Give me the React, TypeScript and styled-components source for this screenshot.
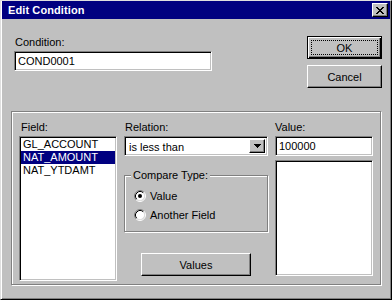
import React from 'react';
import styled, { createGlobalStyle, css } from 'styled-components';

const Global = createGlobalStyle`
  html, body { margin: 0; padding: 0; background: #c0c0c0; }
  body { font-family: "Liberation Sans", Arial, sans-serif; font-size: 11px; color: #000; }
  * { box-sizing: border-box; }
`;

const sunken = css`
  background: #fff;
  border: 1px solid;
  border-color: #808080 #fff #fff #808080;
  box-shadow: inset 1px 1px 0 #000, inset -1px -1px 0 #c0c0c0;
`;

const raised = css`
  background: #c0c0c0;
  border: 1px solid;
  border-color: #fff #000 #000 #fff;
  box-shadow: inset -1px -1px 0 #808080;
`;

const Window = styled.div`
  width: 392px;
  height: 300px;
  background: #c0c0c0;
  border-style: solid;
  border-width: 1px;
  border-color: #dfdfdf #000 #000 #dfdfdf;
  box-shadow: inset 1px 0 0 #fff, inset -1px -1px 0 #808080;
  padding: 0 1px 1px 1px;
  display: flex;
  flex-direction: column;
`;

const TitleBar = styled.div`
  height: 18px;
  background: #000080;
  color: #fff;
  display: flex;
  align-items: center;
  padding: 0 2px 0 6px;
`;

const Title = styled.div`
  flex: 1;
  font-weight: bold;
  font-size: 11px;
  letter-spacing: 0.1px;
`;

const CloseBtn = styled.div`
  ${raised};
  width: 16px;
  height: 14px;
  display: flex;
  align-items: center;
  justify-content: center;
`;

const Body = styled.div`
  flex: 1;
  padding: 17px 8px 0 9px;
  display: flex;
  flex-direction: column;
`;

const TopRow = styled.div`
  display: grid;
  grid-template-columns: 198px 1fr 75px;
  padding-left: 3px;
`;

const Field = styled.div`
  display: flex;
  flex-direction: column;
`;

const Label = styled.div<{ $indent?: number }>`
  height: 13px;
  line-height: 13px;
  margin-left: ${(p) => p.$indent ?? 0}px;
  margin-bottom: 2px;
  white-space: nowrap;
`;

const TextBox = styled.div`
  ${sunken};
  height: 20px;
  width: 100%;
  padding: 0 3px;
  line-height: 18px;
  white-space: nowrap;
`;

const ButtonCol = styled.div`
  grid-column: 3;
  display: flex;
  flex-direction: column;
  gap: 6px;
`;

const Button = styled.div<{ $default?: boolean; $w?: number }>`
  width: ${(p) => p.$w ?? 75}px;
  height: 23px;
  display: flex;
  align-items: stretch;
  justify-content: center;
  text-align: center;
  ${(p) =>
    p.$default
      ? css`
          background: #c0c0c0;
          border: 1px solid #000;
          box-shadow: inset 1px 1px 0 #fff, inset -1px -1px 0 #000, inset -2px -2px 0 #808080;
          padding: 3px;
        `
      : css`
          ${raised};
          padding: 2px;
        `}
`;

const ButtonText = styled.span<{ $focus?: boolean }>`
  flex: 1;
  display: flex;
  align-items: center;
  justify-content: center;
  border: 1px ${(p) => (p.$focus ? 'dotted #000' : 'solid transparent')};
`;

const Frame = styled.div`
  margin-top: 23px;
  width: 370px;
  height: 174px;
  border: 1px solid #808080;
  box-shadow: inset 1px 1px 0 #fff, 1px 1px 0 #fff;
  padding: 9px 0 0 7px;
  display: grid;
  grid-template-columns: 98px 144px 98px;
  column-gap: 7px;
`;

const Column = styled.div`
  display: flex;
  flex-direction: column;
`;

const ListBox = styled.div<{ $h: number; $gap?: number }>`
  ${sunken};
  height: ${(p) => p.$h}px;
  margin-top: ${(p) => p.$gap ?? 0}px;
  padding: 1px 1px;
  overflow: hidden;
`;

const ListItem = styled.div<{ $selected?: boolean }>`
  height: 13px;
  line-height: 13px;
  padding-left: 2px;
  white-space: nowrap;
  background: ${(p) => (p.$selected ? '#000080' : 'transparent')};
  color: ${(p) => (p.$selected ? '#fff' : '#000')};
`;

const Combo = styled.div`
  ${sunken};
  height: 20px;
  display: flex;
  align-items: stretch;
  padding: 2px;
`;

const ComboText = styled.div`
  flex: 1;
  line-height: 16px;
  padding-left: 2px;
`;

const DropBtn = styled.div`
  ${raised};
  width: 16px;
  display: flex;
  align-items: center;
  justify-content: center;
`;

const Group = styled.fieldset`
  margin: 13px 0 0 0;
  padding: 0;
  height: 63px;
  border: 1px solid #808080;
  box-shadow: inset 1px 1px 0 #fff, 1px 1px 0 #fff;
  display: flex;
  flex-direction: column;
  min-width: 0;
`;

const Legend = styled.legend`
  margin-left: 6px;
  padding: 0 2px;
  background: #c0c0c0;
  line-height: 13px;
  height: 13px;
`;

const RadioRow = styled.div<{ $first?: boolean }>`
  display: flex;
  align-items: center;
  gap: 4px;
  height: 13px;
  padding-left: 9px;
  margin-top: ${(p) => (p.$first ? 7 : 6)}px;
`;

const ValuesWrap = styled.div`
  margin-top: 21px;
  padding-left: 17px;
`;

const CloseIcon = () => {
  const rows = ['xx....xx', '.xx..xx.', '..xxxx..', '...xx...', '..xxxx..', '.xx..xx.', 'xx....xx'];
  const d = rows
    .map((r, y) =>
      r
        .split('')
        .map((c, x) => (c === 'x' ? `M${x} ${y}h1v1h-1z` : ''))
        .join('')
    )
    .join('');
  return (
    <svg width="8" height="7" viewBox="0 0 8 7" shapeRendering="crispEdges">
      <path d={d} fill="#000" />
    </svg>
  );
};

const DownArrow = () => (
  <svg width="7" height="4" viewBox="0 0 7 4" shapeRendering="crispEdges">
    <path d="M0 0h7v1h-1v1h-1v1h-1v1h-1v-1h-1v-1h-1v-1h-1z" fill="#000" />
  </svg>
);

const Radio = ({ checked }: { checked?: boolean }) => (
  <svg width="12" height="12" viewBox="0 0 12 12">
    <circle cx="6" cy="6" r="4.5" fill="#fff" />
    <path d="M2.11 9.89 A5.5 5.5 0 0 1 9.89 2.11" fill="none" stroke="#808080" />
    <path d="M9.89 2.11 A5.5 5.5 0 0 1 2.11 9.89" fill="none" stroke="#fff" />
    <path d="M2.82 9.18 A4.5 4.5 0 0 1 9.18 2.82" fill="none" stroke="#000" />
    <path d="M9.18 2.82 A4.5 4.5 0 0 1 2.82 9.18" fill="none" stroke="#dfdfdf" />
    {checked && <circle cx="6" cy="6" r="2" fill="#000" />}
  </svg>
);

export default function App() {
  return (
    <>
      <Global />
      <Window>
        <TitleBar>
          <Title>Edit Condition</Title>
          <CloseBtn>
            <CloseIcon />
          </CloseBtn>
        </TitleBar>
        <Body>
          <TopRow>
            <Field>
              <Label $indent={1}>Condition:</Label>
              <TextBox>COND0001</TextBox>
            </Field>
            <ButtonCol>
              <Button $default>
                <ButtonText $focus>OK</ButtonText>
              </Button>
              <Button>
                <ButtonText>Cancel</ButtonText>
              </Button>
            </ButtonCol>
          </TopRow>
          <Frame>
            <Column>
              <Label $indent={2}>Field:</Label>
              <ListBox $h={145}>
                <ListItem>GL_ACCOUNT</ListItem>
                <ListItem $selected>NAT_AMOUNT</ListItem>
                <ListItem>NAT_YTDAMT</ListItem>
              </ListBox>
            </Column>
            <Column>
              <Label $indent={1}>Relation:</Label>
              <Combo>
                <ComboText>is less than</ComboText>
                <DropBtn>
                  <DownArrow />
                </DropBtn>
              </Combo>
              <Group>
                <Legend>Compare Type:</Legend>
                <RadioRow $first>
                  <Radio checked />
                  <span>Value</span>
                </RadioRow>
                <RadioRow>
                  <Radio />
                  <span>Another Field</span>
                </RadioRow>
              </Group>
              <ValuesWrap>
                <Button $w={110}>
                  <ButtonText>Values</ButtonText>
                </Button>
              </ValuesWrap>
            </Column>
            <Column>
              <Label>Value:</Label>
              <TextBox>100000</TextBox>
              <ListBox $h={116} $gap={4} />
            </Column>
          </Frame>
        </Body>
      </Window>
    </>
  );
}
